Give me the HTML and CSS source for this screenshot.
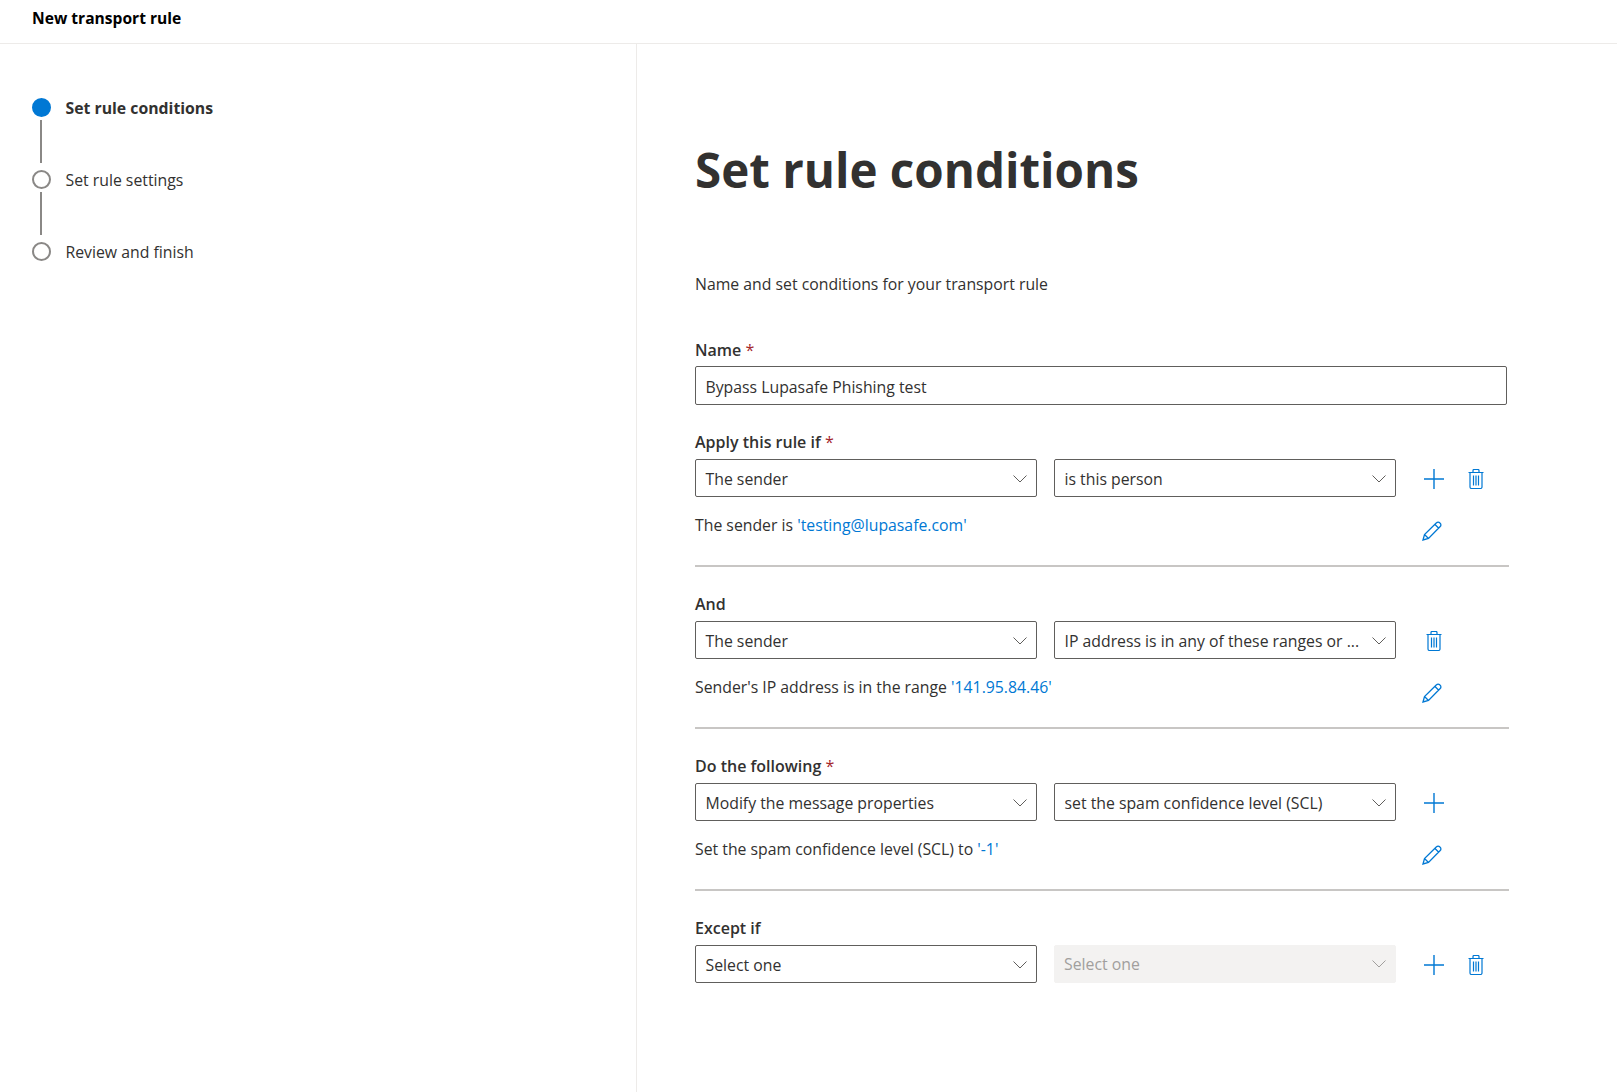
FILE: index.html
```html
<!DOCTYPE html>
<html lang="en">
<head>
  <meta charset="UTF-8" />
  <title>New transport rule</title>
  <link rel="stylesheet" href="styles.css">
</head>
<body>
  <svg class="defs" width="0" height="0">
    <symbol id="plus" viewBox="0 0 20 20"><path d="M0 10H20M10 0V20" fill="none" stroke="currentColor" stroke-width="1.4"/></symbol>
    <symbol id="trash" viewBox="0 0 16 20"><path d="M.5 3.500H15.500M2 3.500V18a1.500 1.500 0 0 0 1.500 1.500h9A1.500 1.500 0 0 0 14 18V3.500M5 3.500V1.500a1 1 0 0 1 1-1h4a1 1 0 0 1 1 1v2M5.500 6.500V16.500M8 6.500V16.500M10.500 6.500V16.500" fill="none" stroke="currentColor" stroke-width="1.2"/></symbol>
    <symbol id="pencil" viewBox="0 0 20 20"><path d="M1 19l1.500-5.500L14.500 1.800a2.200 2.200 0 0 1 3.200 0l.5.500a2.200 2.200 0 0 1 0 3.200L6.500 17.500zM2.500 13.500l4 4M13 3.500l3.500 3.500" fill="none" stroke="currentColor" stroke-width="1.300"/></symbol>
    <symbol id="chev" viewBox="0 0 14 8"><path d="M.5.500L7 7 13.500.500" fill="none" stroke="currentColor" stroke-width="1"/></symbol>
  </svg>

  <header class="top-bar">New transport rule</header>

  <div class="wizard">
    <nav class="steps">
      <div class="step step-active"><span class="dot"></span><span class="step-text">Set rule conditions</span></div>
      <div class="step-line"></div>
      <div class="step"><span class="dot"></span><span class="step-text">Set rule settings</span></div>
      <div class="step-line"></div>
      <div class="step"><span class="dot"></span><span class="step-text">Review and finish</span></div>
    </nav>

    <main class="content">
      <h1>Set rule conditions</h1>
      <p class="intro">Name and set conditions for your transport rule</p>

      <label class="field-label">Name <span class="req">*</span></label>
      <div class="text-input">Bypass Lupasafe Phishing test</div>

      <section class="group first">
        <label class="field-label">Apply this rule if <span class="req">*</span></label>
        <div class="row">
          <div class="select"><span>The sender</span><svg class="chev"><use href="#chev"/></svg></div>
          <div class="select"><span>is this person</span><svg class="chev"><use href="#chev"/></svg></div>
          <div class="actions">
            <svg class="plus"><use href="#plus"/></svg>
            <svg class="trash"><use href="#trash"/></svg>
          </div>
        </div>
        <div class="summary">
          <span>The sender is <a>'testing@lupasafe.com'</a></span>
          <svg class="pencil"><use href="#pencil"/></svg>
        </div>
      </section>

      <section class="group">
        <label class="field-label">And</label>
        <div class="row">
          <div class="select"><span>The sender</span><svg class="chev"><use href="#chev"/></svg></div>
          <div class="select"><span class="clip">IP address is in any of these ranges or ...</span><svg class="chev"><use href="#chev"/></svg></div>
          <div class="actions">
            <svg class="trash trash-only"><use href="#trash"/></svg>
          </div>
        </div>
        <div class="summary">
          <span>Sender's IP address is in the range <a>'141.95.84.46'</a></span>
          <svg class="pencil"><use href="#pencil"/></svg>
        </div>
      </section>

      <section class="group">
        <label class="field-label">Do the following <span class="req">*</span></label>
        <div class="row">
          <div class="select"><span>Modify the message properties</span><svg class="chev"><use href="#chev"/></svg></div>
          <div class="select"><span>set the spam confidence level (SCL)</span><svg class="chev"><use href="#chev"/></svg></div>
          <div class="actions">
            <svg class="plus"><use href="#plus"/></svg>
          </div>
        </div>
        <div class="summary">
          <span>Set the spam confidence level (SCL) to <a>'-1'</a></span>
          <svg class="pencil"><use href="#pencil"/></svg>
        </div>
      </section>

      <section class="group last">
        <label class="field-label">Except if</label>
        <div class="row">
          <div class="select"><span>Select one</span><svg class="chev"><use href="#chev"/></svg></div>
          <div class="select disabled"><span>Select one</span><svg class="chev"><use href="#chev"/></svg></div>
          <div class="actions">
            <svg class="plus"><use href="#plus"/></svg>
            <svg class="trash"><use href="#trash"/></svg>
          </div>
        </div>
      </section>
    </main>
  </div>
</body>
</html>
```

FILE: styles.css
```css
html, body {
  height: 100%;
}
body {
  margin: 0;
  display: flex;
  flex-direction: column;
  font-family: "Open Sans", "Noto Sans", sans-serif;
  font-size: 15.8px;
  color: #323130;
  background: white;
  overflow: hidden;
}
.defs {
  position: absolute;
}
.top-bar {
  height: 44px;
  line-height: 36px;
  padding-left: 32px;
  box-sizing: border-box;
  border-bottom: 1px solid #edebe9;
  font-size: 15.6px;
  font-weight: 700;
  color: black;
}
.wizard {
  flex: 1;
  display: flex;
}
.steps {
  width: 637px;
  box-sizing: border-box;
  padding: 53px 0 0 32px;
  border-right: 1px solid #edebe9;
}
.step {
  display: flex;
  align-items: center;
  gap: 14.500px;
  height: 20px;
}
.step-text {
  padding-top: 1px;
}
.dot {
  width: 19px;
  height: 19px;
  box-sizing: border-box;
  border: 2.500px solid #8a8886;
  border-radius: 50%;
}
.step-active {
  font-weight: 700;
}
.step-active .dot {
  background: #0078d4;
  border-color: #0078d4;
}
.step-line {
  width: 2px;
  height: 43px;
  margin: 3px 0 6px 8px;
  background: #8a8886;
}
.content {
  padding-left: 58px;
  width: 814px;
}
h1 {
  margin: 96px 0 0;
  font-size: 47.500px;
  line-height: 60px;
  font-weight: 700;
}
.intro {
  margin: 72px 0 0;
  line-height: 24px;
}
.field-label {
  display: block;
  font-weight: 600;
  font-size: 16px;
  line-height: 22px;
}
.intro + .field-label {
  margin-top: 43px;
}
.req {
  color: #a4262c;
  font-weight: 400;
}
.text-input {
  width: 812px;
  height: 39px;
  line-height: 40px;
  margin-top: 5px;
  padding-left: 9.500px;
  box-sizing: border-box;
  border: 1px solid #605e5c;
  border-radius: 2px;
}
.group {
  padding-top: 26px;
  height: 134px;
  border-bottom: 2px solid #c8c6c4;
}
.group.first {
  margin-top: 26px;
  padding-top: 0;
}
.group.last {
  border-bottom: none;
}
.row {
  display: flex;
  gap: 17px;
  margin-top: 6px;
}
.select {
  width: 342px;
  height: 38px;
  padding: 1px 9px 0 9.500px;
  box-sizing: border-box;
  border: 1px solid #605e5c;
  border-radius: 2px;
  display: flex;
  align-items: center;
  justify-content: space-between;
}
.clip {
  white-space: nowrap;
}
.chev {
  width: 14px;
  height: 8px;
  color: #605e5c;
  flex: none;
}
.select.disabled {
  padding: 0 9px;
  background: #f3f2f1;
  border-color: #f3f2f1;
  color: #a19f9d;
}
.select.disabled .chev {
  color: #a19f9d;
}
.actions {
  display: flex;
  align-items: center;
  padding: 1px 0 0 11px;
  color: #0078d4;
}
.plus {
  width: 20px;
  height: 20px;
}
.trash {
  width: 16px;
  height: 20px;
  margin-left: 24px;
}
.trash-only {
  margin-left: 2px;
}
.summary {
  display: flex;
  justify-content: space-between;
  margin-top: 17px;
  width: 747px;
  line-height: 22px;
}
.summary a {
  color: #0078d4;
}
.pencil {
  width: 20px;
  height: 20px;
  margin-top: 7px;
  color: #0078d4;
}
```
